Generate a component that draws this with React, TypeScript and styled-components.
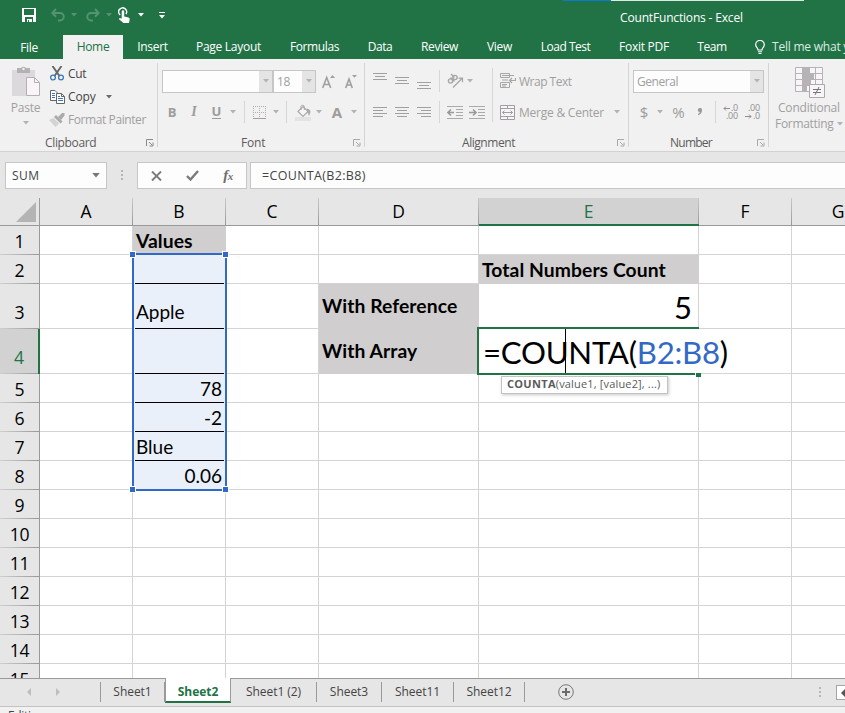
import React from "react";
import styled, { createGlobalStyle, css } from "styled-components";

const Global = createGlobalStyle`
  * { box-sizing: border-box; }
  html, body { margin: 0; padding: 0; overflow: hidden; }
  body { font-family: "Open Sans", "Noto Sans", sans-serif; font-size: 12px; letter-spacing: -0.35px; }
  svg { display: block; flex: none; }
`;

const Window = styled.div`
  width: 845px;
  height: 713px;
  overflow: hidden;
  display: flex;
  flex-direction: column;
  background: #e6e6e6;
`;

/* ---------- title bar and tabs ---------- */

const TitleBar = styled.header`
  flex: none;
  height: 35px;
  position: relative;
  display: flex;
  align-items: center;
  background: #217346;
  color: #fff;
`;

const QuickAccess = styled.div`
  display: flex;
  width: 620px;
  height: 20px;
  margin-top: -5px;
  align-items: center;
  padding-left: 22px;
`;

const DocTitle = styled.div`
  letter-spacing: -0.17px;
  white-space: nowrap;
`;

const EdgeStrip = styled.div`
  position: absolute;
  top: 0;
  left: 563px;
  width: 241px;
  height: 1px;
  background: #dfe9e3;
  border-left: 48px solid #0b79d0;
`;

const TabBar = styled.nav`
  flex: none;
  height: 24px;
  display: flex;
  background: #217346;
  color: #fff;
`;

const RibbonTab = styled.div<{ $w: number; $ls?: number; $active?: boolean }>`
  flex: none;
  width: ${(p) => p.$w}px;
  line-height: 24px;
  text-align: center;
  white-space: nowrap;
  letter-spacing: ${(p) => p.$ls ?? -0.35}px;
  ${(p) =>
    p.$active &&
    css`
      background: #f1f1f1;
      color: #217346;
    `}
`;

const FileTab = styled(RibbonTab)`
  padding-right: 5px;
  line-height: 26px;
`;

const TellMe = styled.div`
  flex: none;
  display: flex;
  gap: 7px;
  padding-left: 14px;
  line-height: 24px;
  white-space: nowrap;
  color: #dcebe2;
  letter-spacing: -0.22px;
`;

/* ---------- ribbon ---------- */

const Ribbon = styled.section`
  flex: none;
  height: 93px;
  display: flex;
  background: #f1f1f1;
  border-bottom: 1px solid #d2d2d2;
  color: #a0a0a0;
`;

const Group = styled.div<{ $w: number }>`
  flex: none;
  width: ${(p) => p.$w}px;
  height: 84px;
  margin-top: 4px;
  border-right: 1px solid #d4d4d4;
  display: flex;
  flex-direction: column;
`;

const GroupBody = styled.div`
  flex: none;
  height: 72px;
  display: flex;
`;

const Column = styled.div`
  display: flex;
  flex-direction: column;
`;

const GroupFooter = styled.div<{ $pad: number; $ls?: number }>`
  flex: none;
  height: 16px;
  display: flex;
  align-items: center;
  justify-content: space-between;
  padding: 0 3px 0 ${(p) => p.$pad}px;
  line-height: 16px;
  color: #5c5c5c;
  letter-spacing: ${(p) => p.$ls ?? -0.35}px;
`;

const ToolRow = styled.div<{ $mt?: number }>`
  display: flex;
  align-items: center;
  height: 24px;
  margin-top: ${(p) => p.$mt ?? 0}px;
`;

const Tool = styled.div<{ $w: number; $gap?: number }>`
  flex: none;
  width: ${(p) => p.$w}px;
  margin-left: ${(p) => p.$gap ?? 0}px;
  display: flex;
  align-items: center;
  justify-content: center;
`;

const Divider = styled.div<{ $gap: number; $h?: number }>`
  flex: none;
  width: 1px;
  height: ${(p) => p.$h ?? 22}px;
  margin-left: ${(p) => p.$gap}px;
  background: #d6d6d6;
`;

const Glyph = styled.span<{ $size?: number; $weight?: number; $italic?: boolean; $underline?: boolean }>`
  font-size: ${(p) => p.$size ?? 13}px;
  font-weight: ${(p) => p.$weight ?? 400};
  line-height: 16px;
  letter-spacing: 0;
  color: #9c9c9c;
  ${(p) => p.$italic && css`font-style: italic; font-family: "Liberation Serif", serif;`}
  ${(p) => p.$underline && css`border-bottom: 1px solid #9c9c9c; line-height: 13px;`}
`;

const ToolText = styled.span<{ $gap: number; $ls?: number; $dark?: boolean }>`
  margin-left: ${(p) => p.$gap}px;
  letter-spacing: ${(p) => p.$ls ?? -0.35}px;
  color: ${(p) => (p.$dark ? "#444" : "#a0a0a0")};
  white-space: nowrap;
`;

const Combo = styled.div<{ $w: number; $gap?: number }>`
  flex: none;
  width: ${(p) => p.$w}px;
  height: 23px;
  margin-left: ${(p) => p.$gap ?? 0}px;
  border: 1px solid #c6c6c6;
  background: #fdfdfd;
  display: flex;
  justify-content: space-between;
  padding-left: 3px;
  line-height: 22px;
  letter-spacing: -0.45px;
`;

const ComboArrow = styled.div`
  width: 13px;
  background: #e4e4e4;
  display: flex;
  align-items: center;
  justify-content: center;
`;

const PasteButton = styled.div`
  flex: none;
  width: 49px;
  padding: 3px 0 0 2px;
  display: flex;
  flex-direction: column;
  align-items: center;
  letter-spacing: -0.2px;
  line-height: 16px;
`;

const PasteLabel = styled.div`
  margin: 3px 0 5px;
`;

const ClipboardRows = styled(Column)`
  margin-top: -1px;
`;

const ClipboardRow = styled.div`
  display: flex;
  align-items: center;
  height: 23px;
`;

const StylesGroup = styled.div`
  flex: none;
  width: 82px;
  padding: 8px 0 0 6px;
  line-height: 16px;
  white-space: nowrap;
`;

const CondIcon = styled.div`
  padding: 0 0 2px 20px;
`;

const CondLine = styled.div<{ $ls: number; $pad: number }>`
  display: flex;
  align-items: center;
  gap: 3px;
  padding-left: ${(p) => p.$pad}px;
  letter-spacing: ${(p) => p.$ls}px;
`;

/* ---------- formula bar ---------- */

const FormulaBar = styled.section`
  flex: none;
  height: 46px;
  padding: 10px 0 9px 5px;
  display: flex;
  color: #444;
`;

const FormulaBox = styled.div<{ $w: number; $gap?: number; $pad?: number }>`
  flex: none;
  width: ${(p) => p.$w}px;
  height: 27px;
  margin-left: ${(p) => p.$gap ?? 0}px;
  padding-left: ${(p) => p.$pad ?? 0}px;
  border: 1px solid #c6c6c6;
  background: #fdfdfd;
  display: flex;
  align-items: center;
  font-size: 12px;
  letter-spacing: 0;
`;

const NameText = styled.span`
  width: 80px;
  letter-spacing: 0.4px;
`;

const FormulaText = styled.span`
  font-size: 12.5px;
  letter-spacing: 0.32px;
`;

/* ---------- grid ---------- */

const Sheet = styled.main`
  flex: none;
  position: relative;
  height: 480px;
  overflow: hidden;
  background: #fff;
  display: grid;
  grid-template-columns: 40px 93px 93px 93px 160px 220px 93px 93px;
  grid-template-rows: 28px 29px 29px 45px 45px repeat(11, 29px);
  font-family: "Lato", "Noto Sans", sans-serif;
  letter-spacing: 0;
  color: #000;
`;

const Corner = styled.div`
  display: flex;
  align-items: flex-end;
  justify-content: flex-end;
  padding: 0 3px 3px 0;
  background: #e6e6e6;
  border-right: 1px solid #9b9b9b;
  border-bottom: 1px solid #999;
`;

const ColHead = styled.div<{ $active?: boolean }>`
  padding-right: 1px;
  font: 17.5px/27px "Open Sans", sans-serif;
  text-align: center;
  background: linear-gradient(#c9c9c9, #999) right / 1px 100% no-repeat #e6e6e6;
  border-bottom: 1px solid #999;
  ${(p) =>
    p.$active &&
    css`
      color: #217346;
      background-color: #d2d2d2;
      border-bottom: 2px solid #217346;
    `}
`;

const RowHead = styled.div<{ $active?: boolean; $tall?: boolean }>`
  display: flex;
  align-items: flex-end;
  justify-content: center;
  padding-bottom: ${(p) => (p.$tall ? 4 : 1)}px;
  font: 17.6px/26px "Open Sans", sans-serif;
  letter-spacing: -0.2px;
  background: linear-gradient(90deg, #cfcfcf, #999) bottom / 100% 1px no-repeat #e6e6e6;
  border-right: 1px solid #999;
  ${(p) =>
    p.$active &&
    css`
      color: #217346;
      background-color: #d2d2d2;
      border-right: 2px solid #217346;
    `}
`;

type CellKind = "plain" | "header" | "range";

const Cell = styled.div<{ $kind: CellKind; $tall?: boolean; $right?: boolean; $middle?: boolean; $big?: boolean }>`
  min-width: 0;
  display: flex;
  align-items: ${(p) => (p.$middle ? "center" : "flex-end")};
  justify-content: ${(p) => (p.$right ? "flex-end" : "flex-start")};
  padding: 0 ${(p) => (p.$big ? 6 : 3)}px ${(p) => (p.$middle || p.$big ? 2 : p.$tall ? 4 : 1)}px 3px;
  font-size: ${(p) => (p.$big ? 31 : 19)}px;
  line-height: ${(p) => (p.$big ? 38 : 25)}px;
  white-space: nowrap;
  border-right: 1px solid #d4d4d4;
  border-bottom: 1px solid #d4d4d4;
  ${(p) =>
    p.$kind === "header" &&
    css`
      font-weight: 700;
      font-size: 19.3px;
      letter-spacing: 0.08px;
      background: #d0cece;
      border-color: #d0cece;
    `}
  ${(p) =>
    p.$kind === "range" &&
    css`
      background: #e9f0fa;
      border-bottom-color: #000;
    `}
`;

/* Outline of the referenced range, drawn over the cells of column B. */
const RangeOutline = styled.div`
  position: absolute;
  left: 132px;
  top: 55px;
  width: 95px;
  height: 238px;
  border: 2px solid #3369c6;
  box-shadow: inset 0 0 0 1px #e9f0fa;
`;

const Handle = styled.div<{ $right?: boolean; $bottom?: boolean }>`
  position: absolute;
  width: 7px;
  height: 7px;
  background: #3369c6;
  border: 1px solid #fff;
  ${(p) => (p.$right ? "right: -4px;" : "left: -5px;")}
  ${(p) => (p.$bottom ? "bottom: -4px;" : "top: -4px;")}
`;

/* In-cell editor, which spills past the right edge of column E. */
const Editor = styled.div`
  position: absolute;
  left: 477px;
  top: 129px;
  width: 222px;
  height: 48px;
  border: 2px solid #217346;
  border-right: none;
`;

const EditorText = styled.div`
  width: 253px;
  height: 44px;
  padding-left: 4px;
  background: #fff;
  font-size: 31.2px;
  line-height: 46px;
  letter-spacing: -0.26px;
  white-space: nowrap;
`;

const RefText = styled.span`
  color: #3369c6;
`;

const Caret = styled.div`
  position: absolute;
  left: 86px;
  top: 0;
  width: 1px;
  height: 44px;
  background: #000;
`;

const FillHandle = styled.div`
  position: absolute;
  right: -2px;
  bottom: -4px;
  width: 6px;
  height: 5px;
  background: #217346;
  border: solid #fff;
  border-width: 1px 0 0 1px;
`;

const ArgTip = styled.div`
  position: absolute;
  left: 501px;
  top: 178px;
  width: 167px;
  height: 18px;
  padding-left: 5px;
  border: 1px solid #c3c3c3;
  background: #fff;
  box-shadow: 1px 1px 3px rgba(0, 0, 0, 0.22);
  font: 11px/14px "Open Sans", sans-serif;
  letter-spacing: 0.16px;
  color: #5a5a5a;
  white-space: nowrap;
`;

const ArgName = styled.b`
  letter-spacing: 0.3px;
`;

/* ---------- sheet tabs ---------- */

const SheetBar = styled.footer`
  flex: none;
  height: 29px;
  display: flex;
  align-items: flex-start;
  border-top: 1px solid #999;
  border-bottom: 1px solid #c3c3c3;
  color: #444;
`;

const SheetNav = styled.div`
  flex: none;
  width: 101px;
  height: 20px;
  margin-top: 3px;
  padding: 6px 0 0 27px;
  display: flex;
  gap: 25px;
  border-right: 1px solid #999;
`;

const SheetTab = styled.div<{ $w: number; $active?: boolean }>`
  flex: none;
  width: ${(p) => p.$w}px;
  height: 20px;
  margin-top: 3px;
  text-align: center;
  line-height: 20px;
  letter-spacing: -0.05px;
  white-space: nowrap;
  border-right: 1px solid #999;
  ${(p) =>
    p.$active &&
    css`
      height: 25px;
      margin-top: -1px;
      line-height: 27px;
      font-weight: 700;
      color: #217346;
      background: #fff;
      border-left: 1px solid #999;
      border-bottom: 2px solid #217346;
    `}
`;

const AddSheet = styled.div`
  flex: none;
  padding: 5px 0 0 33px;
  width: 294px;
`;

const Splitter = styled.div`
  flex: none;
  width: 17px;
  padding-top: 8px;
`;

const ScrollButton = styled.div`
  flex: none;
  width: 16px;
  height: 15px;
  margin-top: 6px;
  border: 1px solid #a5a5a5;
  background: #fff;
  padding: 3px 0 0 4px;
`;

const StatusBar = styled.div`
  flex: none;
  height: 6px;
  overflow: hidden;
  background: #f1f1f1;
  padding: 1px 0 0 8px;
  line-height: 16px;
  color: #444;
`;

/* ---------- drawings ---------- */

const Arrow = ({ color = "#b3b3b3", w = 6 }: { color?: string; w?: number }) => (
  <svg width={w} height={w > 6 ? 5 : 4} viewBox="0 0 6 4"><path d="M0 0h6L3 3.5z" fill={color} /></svg>
);

const SaveIcon = () => (
  <svg width="14" height="14" viewBox="0 0 14 14">
    <path d="M0 0h14v14H0z" fill="#fff" />
    <path d="M2 1h10v6H2zM3 9h8v5H3z" fill="#217346" />
    <path d="M5 11h5v3H7v-2H6v2H5z" fill="#fff" />
  </svg>
);

const UndoIcon = ({ flip }: { flip?: boolean }) => (
  <svg width="14" height="14" viewBox="0 0 14 14">
    <g transform={flip ? "translate(14 0) scale(-1 1)" : undefined} fill="none" stroke="#549373" strokeWidth="2">
      <path d="M5 1 1.3 5 5 8.7M1.5 5H9a3.7 3.7 0 0 1 0 7.5H7" />
    </g>
  </svg>
);

const TouchIcon = () => (
  <svg width="13" height="17" viewBox="0 0 13 17">
    <path d="M2.2 8A4 4 0 1 1 8 7" fill="none" stroke="#fff" strokeWidth="1.5" />
    <path d="M3.7 4.5a1.2 1.2 0 0 1 2.5 0v5l4.3 1q1.4.4 1.2 2L11 16H5.5L1 12.2q-.4-1.2 1-1.3l1.7.8z" fill="#fff" />
  </svg>
);

const CustomizeIcon = () => (
  <svg width="6" height="7" viewBox="0 0 6 7"><path d="M0 0h6v1H0zM0 3h6L3 6.5z" fill="#fff" /></svg>
);

const BulbIcon = () => (
  <svg width="10" height="15" viewBox="0 0 10 15">
    <path d="M3 10C3 8 .7 7.3.7 4.7a4.3 4.3 0 0 1 8.6 0C9.3 7.3 7 8 7 10z" fill="none" stroke="#fff" strokeWidth="1.2" />
    <path d="M3 11.3h4v1H3zM3.5 13h3v1h-3z" fill="#fff" />
  </svg>
);

const PasteIcon = () => (
  <svg width="29" height="31" viewBox="0 0 29 31">
    <path d="M1 4h23v26H1z" fill="#dcd9dc" />
    <path d="M6 2h4a3 3 0 0 1 5 0h4v5H6z" fill="#b3b1b3" />
    <circle cx="12.5" cy="3" r="1.2" fill="#f1f1f1" />
    <path d="M15.5 11.5h8l5 5v13h-13z" fill="#f8f4f8" stroke="#b3b1b3" />
    <path d="M23.5 11.5v5h5" fill="none" stroke="#b3b1b3" />
  </svg>
);

const CutIcon = () => (
  <svg width="14" height="15" viewBox="0 0 14 15">
    <path d="M2.5 0 9.5 10M11.5 0 4.5 10" stroke="#666" strokeWidth="1.9" />
    <circle cx="3" cy="11.5" r="2.4" fill="none" stroke="#3b78b5" strokeWidth="1.3" />
    <circle cx="11" cy="11.5" r="2.4" fill="none" stroke="#3b78b5" strokeWidth="1.3" />
  </svg>
);

const CopyIcon = () => (
  <svg width="15" height="14" viewBox="0 0 15 14">
    <path d="M.5.5H5L7 2.5v8H.5z" fill="#fff" stroke="#666" />
    <path d="M6.5 3.5h5l3 3v7h-8z" fill="#fff" stroke="#666" />
    <path d="M11.5 3.5v3h3" fill="none" stroke="#666" />
    <path d="M2 3.5h3M2 5.5h3M2 7.5h3M8 6.5h2M8 8.5h5M8 10.5h5" stroke="#3b78b5" />
  </svg>
);

const PainterIcon = () => (
  <svg width="16" height="14" viewBox="0 0 16 14">
    <path d="M0 7 4.5 5 10 10.5 6.5 14z" fill="#d5d2d5" />
    <path d="m5 4 2-2 6.5 6.5-2 2z" fill="#aaa" />
    <path d="m9 4 4-4h2.5v2.5L12 7z" fill="#aaa" />
  </svg>
);

const LauncherIcon = ({ color = "#a9a9a9" }: { color?: string }) => (
  <svg width="8" height="8" viewBox="0 0 8 8">
    <path d="M7 .5H.5V7M3 3l3 3M7 3.5V7H3.5" fill="none" stroke={color} />
  </svg>
);

const FontSizeIcon = ({ down }: { down?: boolean }) => (
  <svg width="13" height="15" viewBox="0 0 13 15">
    <path
      d={down ? "M.7 14 4 5l3.3 9M1.8 11h4.4" : "M.7 14 4.7 3.5l4 10.5M2 10.5h5.4"}
      fill="none" stroke="#a0a0a0" strokeWidth="1.6"
    />
    <path d={down ? "M7 1h5L9.5 3.8z" : "M8 4h5l-2.5-3z"} fill="#a0a0a0" />
  </svg>
);

const BordersIcon = () => (
  <svg width="13" height="13" viewBox="0 0 13 13">
    <path d="M.5 0v12M6.5 0v12M12.5 0v12M0 .5h13M0 6.5h13" stroke="#b3aab3" strokeDasharray="1 1" />
    <path d="M0 12.5h13" stroke="#a0a0a0" />
  </svg>
);

const BucketIcon = () => (
  <svg width="16" height="17" viewBox="0 0 16 17">
    <path d="m3 7.5 5-5 5 5-5 5z" fill="#f8f4f8" stroke="#aaa" strokeWidth="1.2" />
    <path d="M6 6V2.5a1.7 1.7 0 0 1 3.3 0V6" fill="none" stroke="#aaa" />
    <path d="M11.5 4.5q4 .5 4 3.5l-1.5 4-1.5-4z" fill="#a8a8a8" />
    <path d="M0 13h16v4H0z" fill="#e3e3e3" />
  </svg>
);

const linePath = (rows: [number, number][], y0 = 0, step = 3) =>
  rows.map(([x, w], i) => `M${x} ${y0 + i * step + 0.5}h${w}`).join("");

const LinesIcon = ({ rows, y0 = 0, step = 3 }: { rows: [number, number][]; y0?: number; step?: number }) => (
  <svg width="14" height="16" viewBox="0 0 14 16"><path d={linePath(rows, y0, step)} stroke="#a0a0a0" /></svg>
);

const OrientationIcon = () => (
  <svg width="17" height="16" viewBox="0 0 17 16">
    <g fill="none" stroke="#a6a6a6" strokeWidth="1.4">
      <circle cx="3.5" cy="8" r="2.1" />
      <path d="m3.5 4.500 4 4" />
      <circle cx="8" cy="4.5" r="2.1" />
      <path d="m4 1 3.5 3.5" />
      <path d="m6 14.5 9-9M11.5 5.2h4v4" strokeWidth="1.2" />
    </g>
  </svg>
);

const IndentIcon = ({ right }: { right?: boolean }) => (
  <svg width="16" height="13" viewBox="0 0 16 13">
    <path d="M0 .5h16M9 3.5h7M9 6.5h7M9 9.5h7M0 12.5h16" stroke="#aaa" />
    <path d={right ? "M0 6.5h6M4 3.5l3 3-3 3" : "M7 6.5H1M4 3.5l-3 3 3 3"} fill="none" stroke="#9a9a9a" strokeWidth="1.6" />
  </svg>
);

const WrapIcon = () => (
  <svg width="16" height="16" viewBox="0 0 16 16">
    <path d="M.5.5h9v4h-9zM.5 9.5h9v5h-9zM2 2.5h12M2 11.5h5M2 7h6M2 13h4" fill="none" stroke="#a6a6a6" />
    <path d="M15.5 5v2.5H10M12 5l-2.5 2.500L12 10" fill="none" stroke="#a6a6a6" strokeWidth="1.2" />
  </svg>
);

const MergeIcon = () => (
  <svg width="15" height="15" viewBox="0 0 15 15">
    <path d="M.5.5h14v14H.5zM.5 3.5h14M.5 11.5h14M7.500.5v3M7.500 11.500v3" fill="#f8f4f8" stroke="#a0a0a0" />
    <path d="M2.5 7.500h10M4.500 5.500l-2 2 2 2M10.500 5.500l2 2-2 2" fill="none" stroke="#a0a0a0" />
  </svg>
);

const CommaIcon = () => (
  <svg width="6" height="8" viewBox="0 0 6 8">
    <path d="M2.800 0a2 2 0 0 1 2.200 2.200C5 5 3.500 6.500 1 7.200V6C2 5.500 2.600 5 2.700 4A2 2 0 1 1 2.800 0z" fill="#9a9a9a" />
  </svg>
);

const DecimalBox = styled.div`
  width: 15px;
  display: flex;
  flex-direction: column;
  font: 9px/8px "Open Sans", sans-serif;
  letter-spacing: -0.2px;
  color: #8f8f8f;
`;

const DecimalLine = styled.div<{ $end?: boolean }>`
  display: flex;
  align-items: center;
  justify-content: ${(p) => (p.$end ? "flex-end" : "space-between")};
`;

const TinyArrow = ({ right }: { right?: boolean }) => (
  <svg width="7" height="5" viewBox="0 0 7 5">
    <path d={right ? "M0 2.5h6M4 .5l2 2-2 2" : "M7 2.5H1M3 .5l-2 2 2 2"} fill="none" stroke="#8f8f8f" />
  </svg>
);

const ConditionalIcon = () => (
  <svg width="30" height="31" viewBox="0 0 30 31">
    <path d="M.5.5h27v24H.5z" fill="#f8f4f8" stroke="#b5b3b5" />
    <path d="M8 1h6v6H8zM8 7h11v6H8zM8 13h8v6H8zM8 19h4v5H8z" fill="#b5b3b5" />
    <path d="M.5 6.500h27M.5 12.500h27M.5 18.500h27M7.500.5v24M14.500.5v24M20.500.5v24" stroke="#b5b3b5" />
    <path d="M14.500 17.500h15v13h-15z" fill="#f8f4f8" stroke="#aaa" />
    <path d="M18 22.500h8M18 25.500h8M24 20l-4 8" stroke="#777" />
  </svg>
);

const Dots = () => (
  <svg width="2" height="11" viewBox="0 0 2 11" shapeRendering="crispEdges">
    <path d="M0 0h2v2H0zM0 4h2v2H0zM0 8h2v2H0z" fill="#b5b5b5" />
  </svg>
);

const DotsCell = styled.div`
  flex: none;
  width: 30px;
  padding: 8px 0 0 14px;
`;

const CancelIcon = () => (
  <svg width="11" height="10" viewBox="0 0 11 10"><path d="m1 .5 9 9M10 .5l-9 9" stroke="#7a7a7a" strokeWidth="1.9" /></svg>
);
const CheckIcon = () => (
  <svg width="13" height="11" viewBox="0 0 13 11"><path d="m1 6 3.500 3.500L12 1" fill="none" stroke="#7a7a7a" strokeWidth="2.4" /></svg>
);
const FxText = styled.span`
  font: italic 700 15px/18px "Liberation Serif", serif;
  color: #6f6f6f;
  letter-spacing: -0.5px;
`;
const FxSub = styled.span`
  font-size: 11px;
`;

const NavArrow = ({ right, color = "#bdbdbd" }: { right?: boolean; color?: string }) => (
  <svg width="4" height="8" viewBox="0 0 4 8"><path d={right ? "M0 0l4 4-4 4z" : "M4 0 0 4l4 4z"} fill={color} /></svg>
);

const PlusIcon = () => (
  <svg width="16" height="16" viewBox="0 0 16 16">
    <circle cx="8" cy="8" r="7.3" fill="none" stroke="#777" />
    <path d="M8 4v8M4 8h8" stroke="#6b6b6b" strokeWidth="2" />
  </svg>
);

const TriangleIcon = () => (
  <svg width="20" height="20" viewBox="0 0 20 20"><path d="M20 0v20H0z" fill="#b4b4b4" /></svg>
);

/* ---------- data ---------- */

const tabs: { label: string; w: number; ls?: number; active?: boolean }[] = [
  { label: "Home", w: 60, ls: -0.3, active: true },
  { label: "Insert", w: 59, ls: -0.3 },
  { label: "Page Layout", w: 93, ls: -0.28 },
  { label: "Formulas", w: 79, ls: -0.4 },
  { label: "Data", w: 52, ls: -0.4 },
  { label: "Review", w: 67, ls: -0.4 },
  { label: "View", w: 53, ls: -0.3 },
  { label: "Load Test", w: 79, ls: -0.5 },
  { label: "Foxit PDF", w: 78, ls: -0.25 },
  { label: "Team", w: 58, ls: -0.4 },
];

const columns = ["A", "B", "C", "D", "E", "F", "G"];

type CellData = { text?: string; kind?: CellKind; right?: boolean; middle?: boolean; big?: boolean };

const cells: Record<string, CellData> = {
  B1: { text: "Values", kind: "header" },
  B2: { kind: "range" },
  B3: { text: "Apple", kind: "range" },
  B4: { kind: "range" },
  B5: { text: "78", kind: "range", right: true },
  B6: { text: "-2", kind: "range", right: true },
  B7: { text: "Blue", kind: "range" },
  B8: { text: "0.06", kind: "range", right: true },
  E2: { text: "Total Numbers Count", kind: "header" },
  D3: { text: "With Reference", kind: "header", middle: true },
  D4: { text: "With Array", kind: "header", middle: true },
  E3: { text: "5", right: true, big: true },
};

const isTall = (row: number) => row === 3 || row === 4;

const sheets = [
  { label: "Sheet1", w: 64 },
  { label: "Sheet2", w: 66, active: true },
  { label: "Sheet1 (2)", w: 86 },
  { label: "Sheet3", w: 65 },
  { label: "Sheet11", w: 72 },
  { label: "Sheet12", w: 71 },
];

export default function App() {
  return (
    <>
      <Global />
      <Window>
        <TitleBar>
          <QuickAccess>
            <Tool $w={14}><SaveIcon /></Tool>
            <Tool $w={14} $gap={15}><UndoIcon /></Tool>
            <Tool $w={6} $gap={6}><Arrow color="#549373" /></Tool>
            <Tool $w={14} $gap={9}><UndoIcon flip /></Tool>
            <Tool $w={6} $gap={6}><Arrow color="#549373" /></Tool>
            <Tool $w={13} $gap={6}><TouchIcon /></Tool>
            <Tool $w={6} $gap={7}><Arrow color="#fff" /></Tool>
            <Tool $w={6} $gap={15}><CustomizeIcon /></Tool>
          </QuickAccess>
          <DocTitle>CountFunctions - Excel</DocTitle>
          <EdgeStrip />
        </TitleBar>
        <TabBar>
          <FileTab $w={63}>File</FileTab>
          {tabs.map((t) => (
            <RibbonTab key={t.label} $w={t.w} $ls={t.ls} $active={t.active}>{t.label}</RibbonTab>
          ))}
          <TellMe>
            <Tool $w={10}><BulbIcon /></Tool>
            <span>Tell me what you want</span>
          </TellMe>
        </TabBar>

        <Ribbon>
          <Group $w={158}>
            <GroupBody>
              <PasteButton>
                <PasteIcon />
                <PasteLabel>Paste</PasteLabel>
                <Arrow />
              </PasteButton>
              <ClipboardRows>
                <ClipboardRow><Tool $w={16}><CutIcon /></Tool><ToolText $gap={3} $dark>Cut</ToolText></ClipboardRow>
                <ClipboardRow>
                  <Tool $w={16}><CopyIcon /></Tool><ToolText $gap={3} $ls={-0.1} $dark>Copy</ToolText>
                  <Tool $w={6} $gap={10}><Arrow color="#6b6b6b" /></Tool>
                </ClipboardRow>
                <ClipboardRow><Tool $w={16}><PainterIcon /></Tool><ToolText $gap={3} $ls={-0.41}>Format Painter</ToolText></ClipboardRow>
              </ClipboardRows>
            </GroupBody>
            <GroupFooter $pad={45}>Clipboard<LauncherIcon color="#8a8a8a" /></GroupFooter>
          </Group>

          <Group $w={207}>
            <GroupBody>
              <Column>
                <ToolRow $mt={6}>
                  <Combo $w={111} $gap={4}><span /><ComboArrow><Arrow /></ComboArrow></Combo>
                  <Combo $w={43}><span>18</span><ComboArrow><Arrow /></ComboArrow></Combo>
                  <Tool $w={13} $gap={6}><FontSizeIcon /></Tool>
                  <Tool $w={13} $gap={10}><FontSizeIcon down /></Tool>
                </ToolRow>
                <ToolRow $mt={7}>
                  <Tool $w={10} $gap={9}><Glyph $weight={700}>B</Glyph></Tool>
                  <Tool $w={8} $gap={13}><Glyph $size={14} $italic $weight={700}>I</Glyph></Tool>
                  <Tool $w={9} $gap={14}><Glyph $weight={700} $underline>U</Glyph></Tool>
                  <Tool $w={6} $gap={9}><Arrow /></Tool>
                  <Divider $gap={8} />
                  <Tool $w={13} $gap={8}><BordersIcon /></Tool>
                  <Tool $w={6} $gap={7}><Arrow /></Tool>
                  <Divider $gap={7} />
                  <Tool $w={16} $gap={8}><BucketIcon /></Tool>
                  <Tool $w={6} $gap={5}><Arrow /></Tool>
                  <Tool $w={10} $gap={10}><Glyph $size={15} $weight={700}>A</Glyph></Tool>
                  <Tool $w={6} $gap={9}><Arrow /></Tool>
                </ToolRow>
              </Column>
            </GroupBody>
            <GroupFooter $pad={83} $ls={-0.2}>Font<LauncherIcon /></GroupFooter>
          </Group>

          <Group $w={264}>
            <GroupBody>
              <Column>
                <ToolRow $mt={6}>
                  <Tool $w={14} $gap={8}><LinesIcon rows={[[0, 14], [2, 10], [0, 14]]} y0={0} /></Tool>
                  <Tool $w={14} $gap={8}><LinesIcon rows={[[0, 14], [2, 10], [0, 14]]} y0={4} /></Tool>
                  <Tool $w={14} $gap={8}><LinesIcon rows={[[0, 14], [2, 10], [0, 14]]} y0={9} /></Tool>
                  <Divider $gap={8} />
                  <Tool $w={17} $gap={7}><OrientationIcon /></Tool>
                  <Tool $w={6} $gap={3}><Arrow /></Tool>
                </ToolRow>
                <ToolRow $mt={7}>
                  <Tool $w={14} $gap={8}><LinesIcon rows={[[0, 14], [0, 10], [0, 14], [0, 10]]} y0={3} /></Tool>
                  <Tool $w={14} $gap={8}><LinesIcon rows={[[0, 14], [2, 10], [0, 14], [2, 10]]} y0={3} /></Tool>
                  <Tool $w={14} $gap={8}><LinesIcon rows={[[0, 14], [4, 10], [0, 14], [4, 10]]} y0={3} /></Tool>
                  <Divider $gap={8} />
                  <Tool $w={16} $gap={7}><IndentIcon /></Tool>
                  <Tool $w={16} $gap={6}><IndentIcon right /></Tool>
                </ToolRow>
              </Column>
              <ToolRow $mt={20}><Divider $gap={7} $h={54} /></ToolRow>
              <Column>
                <ToolRow $mt={6}><Tool $w={16} $gap={7}><WrapIcon /></Tool><ToolText $gap={3} $ls={-0.5}>Wrap Text</ToolText></ToolRow>
                <ToolRow $mt={7}>
                  <Tool $w={16} $gap={6}><MergeIcon /></Tool><ToolText $gap={4} $ls={-0.23}>Merge &amp; Center</ToolText>
                  <Tool $w={6} $gap={10}><Arrow /></Tool>
                </ToolRow>
              </Column>
            </GroupBody>
            <GroupFooter $pad={97} $ls={-0.45}>Alignment<LauncherIcon /></GroupFooter>
          </Group>

          <Group $w={140}>
            <GroupBody>
              <Column>
                <ToolRow $mt={6}>
                  <Combo $w={131} $gap={4}><span>General</span><ComboArrow><Arrow /></ComboArrow></Combo>
                </ToolRow>
                <ToolRow $mt={7}>
                  <Tool $w={8} $gap={11}><Glyph $size={15}>$</Glyph></Tool>
                  <Tool $w={6} $gap={9}><Arrow /></Tool>
                  <Tool $w={13} $gap={9}><Glyph $size={15}>%</Glyph></Tool>
                  <Tool $w={6} $gap={12}><CommaIcon /></Tool>
                  <Divider $gap={12} />
                  <Tool $w={15} $gap={7}>
                    <DecimalBox>
                      <DecimalLine><TinyArrow />.0</DecimalLine>
                      <DecimalLine $end>.00</DecimalLine>
                    </DecimalBox>
                  </Tool>
                  <Tool $w={15} $gap={7}>
                    <DecimalBox>
                      <DecimalLine $end>.00</DecimalLine>
                      <DecimalLine><TinyArrow right />.0</DecimalLine>
                    </DecimalBox>
                  </Tool>
                </ToolRow>
              </Column>
            </GroupBody>
            <GroupFooter $pad={41} $ls={-0.75}>Number<LauncherIcon /></GroupFooter>
          </Group>

          <StylesGroup>
            <CondIcon><ConditionalIcon /></CondIcon>
            <CondLine $ls={-0.2} $pad={3}>Conditional</CondLine>
            <CondLine $ls={-0.3} $pad={0}>Formatting<Arrow /></CondLine>
          </StylesGroup>
        </Ribbon>

        <FormulaBar>
          <FormulaBox $w={102} $pad={6}><NameText>SUM</NameText><Arrow color="#777" w={8} /></FormulaBox>
          <DotsCell><Dots /></DotsCell>
          <FormulaBox $w={110}>
            <Tool $w={11} $gap={13}><CancelIcon /></Tool>
            <Tool $w={13} $gap={24}><CheckIcon /></Tool>
            <Tool $w={14} $gap={22}><FxText>f<FxSub>x</FxSub></FxText></Tool>
          </FormulaBox>
          <FormulaBox $w={600} $gap={3} $pad={11}><FormulaText>=COUNTA(B2:B8)</FormulaText></FormulaBox>
        </FormulaBar>

        <Sheet>
          <Corner><TriangleIcon /></Corner>
          {columns.map((c) => <ColHead key={c} $active={c === "E"}>{c}</ColHead>)}
          {Array.from({ length: 15 }, (_, i) => i + 1).map((r) => (
            <React.Fragment key={r}>
              <RowHead $active={r === 4} $tall={isTall(r)}>{r}</RowHead>
              {columns.map((c) => {
                const d = cells[c + r] ?? {};
                return (
                  <Cell key={c} $kind={d.kind ?? "plain"} $tall={isTall(r)} $right={d.right} $middle={d.middle} $big={d.big}>
                    {d.text}
                  </Cell>
                );
              })}
            </React.Fragment>
          ))}
          <RangeOutline>
            <Handle /><Handle $right /><Handle $bottom /><Handle $right $bottom />
          </RangeOutline>
          <Editor>
            <EditorText>=COUNTA(<RefText>B2:B8</RefText>)</EditorText>
            <Caret />
            <FillHandle />
          </Editor>
          <ArgTip><ArgName>COUNTA</ArgName>(value1, [value2], ...)</ArgTip>
        </Sheet>

        <SheetBar>
          <SheetNav><NavArrow /><NavArrow right /></SheetNav>
          {sheets.map((s) => <SheetTab key={s.label} $w={s.w} $active={s.active}>{s.label}</SheetTab>)}
          <AddSheet><PlusIcon /></AddSheet>
          <Splitter><Dots /></Splitter>
          <ScrollButton><NavArrow color="#555" /></ScrollButton>
        </SheetBar>
        <StatusBar>Editing</StatusBar>
      </Window>
    </>
  );
}
